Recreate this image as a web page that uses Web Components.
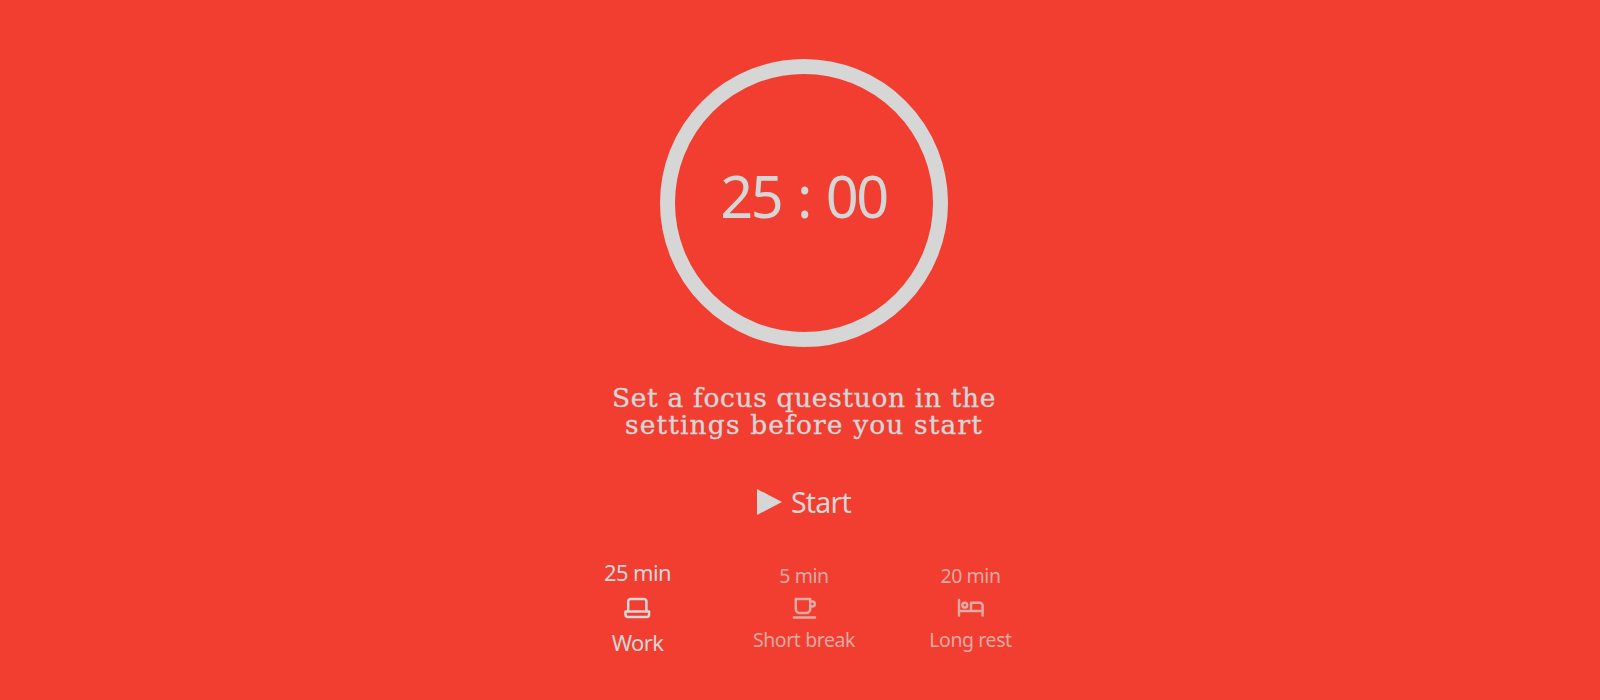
<!DOCTYPE html>
<html lang="en">
<head>
<meta charset="utf-8">
<title>Focus timer</title>
<style>
html,body{margin:0;height:100%;background:#f23e30;overflow:hidden}
</style>
</head>
<body>
<focus-app></focus-app>
<script>
const define = (name, html) => customElements.define(name, class extends HTMLElement {
  constructor() {
    super();
    const t = document.createElement('template');
    t.innerHTML = html;
    this.attachShadow({ mode: 'open' }).append(t.content.cloneNode(true));
  }
});

define('timer-dial', `
<style>
:host{display:flex;justify-content:center;box-sizing:border-box;width:288px;height:288px;border:15px solid #d6d6d6;border-radius:50%;padding-top:83px}
span{font-size:57.6px;line-height:78px;letter-spacing:-2.5px;word-spacing:3.4px;margin-right:1px;white-space:pre}
</style><span><slot></slot></span>`);

define('focus-question', `
<style>
:host{display:block;margin-top:37px;text-align:center;font:26.5px/27px "DejaVu Serif",serif;white-space:nowrap;-webkit-text-stroke:.35px currentColor}
::slotted(div){letter-spacing:.65px}
::slotted(div:last-child){letter-spacing:1.12px}
</style><slot></slot>`);

define('start-button', `
<style>
:host{display:flex;align-items:center;gap:9px;margin-top:44px;font-size:28.5px;line-height:40px;letter-spacing:-.75px}
svg{display:block;width:25px;height:26px}
</style><svg viewBox="0 0 25 26"><path d="M0 0 25 13 0 26z" fill="#d6d6d6"/></svg><span><slot></slot></span>`);

define('session-mode', `
<style>
:host{display:flex;flex-direction:column;align-items:center;width:166.5px;color:#dfa9a4;font-size:19.5px;line-height:28px;letter-spacing:-.42px;white-space:nowrap}
:host([active]){color:#d6d6d6;font-size:22px;letter-spacing:-.65px}
.time{height:43px;padding-top:8px;box-sizing:border-box}
:host([active]) .time{padding-top:4px}
.label{padding-top:5px}
:host([active]) .label{padding-top:7px}
::slotted(svg){display:block;width:28px;height:24px;fill:none;stroke:currentColor;stroke-width:2.5;stroke-linecap:round;stroke-linejoin:round}
</style>
<div class="time"><slot name="time"></slot></div><slot name="icon"></slot><div class="label"><slot></slot></div>`);

define('focus-app', `
<style>
:host{display:flex;flex-direction:column;align-items:center;box-sizing:border-box;height:700px;padding:59px 0 0 8px;color:#d6d6d6;font-family:"Noto Sans","Open Sans",sans-serif}
nav{display:flex;margin-top:32px}
</style>
<timer-dial>25 : 00</timer-dial>
<focus-question><div>Set a focus questuon in the</div><div>settings before you start</div></focus-question>
<start-button>Start</start-button>
<nav>
<session-mode active><span slot="time">25 min</span>
<svg slot="icon" viewBox="0.7 0.4 28 24"><path d="M4.900 14.500V4.800a2.500 2.500 0 0 1 2.500-2.500h13.200a2.500 2.500 0 0 1 2.500 2.500v9.700M2.200 15h23.600v2.800a2.500 2.500 0 0 1-2.500 2.500H4.700a2.500 2.500 0 0 1-2.500-2.500z"/></svg>Work</session-mode>
<session-mode><span slot="time">5 min</span>
<svg slot="icon" viewBox="0 0.4 28 24"><path d="M5.800 2.300h14.400v10.200a4 4 0 0 1-4 4H9.800a4 4 0 0 1-4-4zM20.200 4.900h2.100a2.500 2.500 0 0 1 0 5h-2.100M3.800 21H25"/></svg>Short break</session-mode>
<session-mode><span slot="time">20 min</span>
<svg slot="icon" viewBox="0.7 0.4 28 24"><path d="M2.700 3.500V19M2.700 14.300h23.600M26.300 19V9.200a3 3 0 0 0-3-3h-8.600v8"/><circle cx="8.500" cy="8.600" r="2.400"/></svg>Long rest</session-mode>
</nav>`);
</script>
</body>
</html>
